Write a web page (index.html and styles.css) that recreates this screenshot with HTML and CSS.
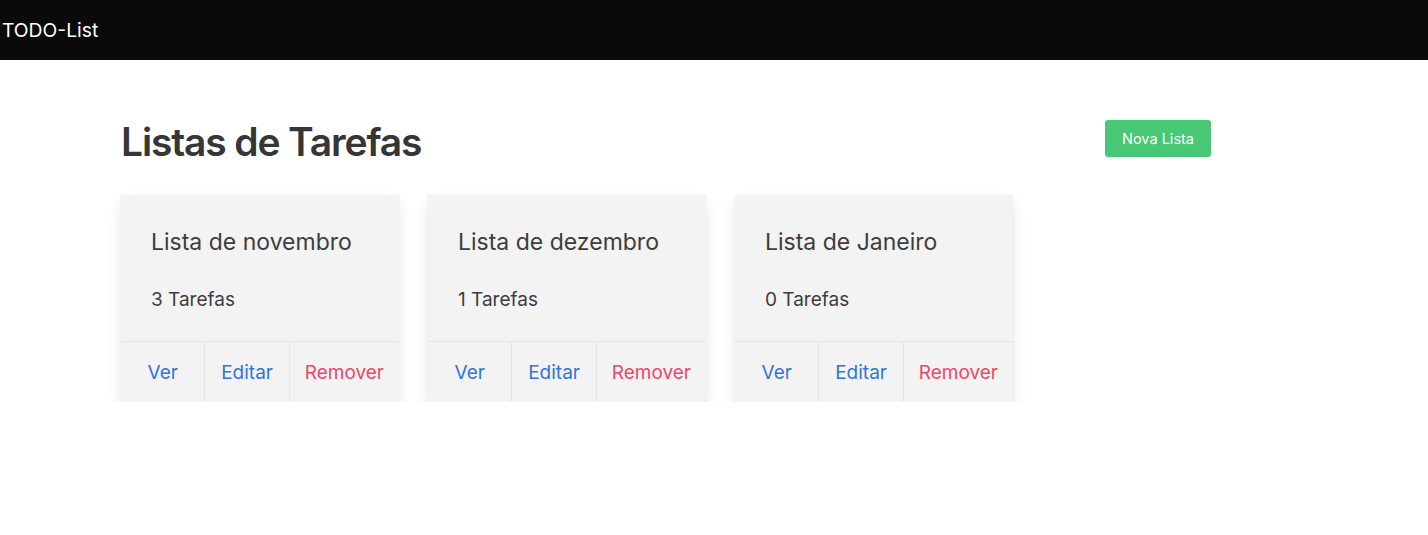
FILE: index.html
```html
<!DOCTYPE html>
<html lang="pt">
<head>
<meta charset="utf-8">
<title>TODO-List</title>
<link rel="stylesheet" href="styles.css">
</head>
<body>
<nav class="navbar">
  <span class="brand">TODO-List</span>
</nav>
<main class="container">
  <div class="page-head">
    <h1 class="title">Listas de Tarefas</h1>
    <button class="btn-success" type="button">Nova Lista</button>
  </div>
  <div class="cards">
    <div class="card">
      <div class="card-content">
        <p class="card-title">Lista de novembro</p>
        <p class="card-sub">3 Tarefas</p>
      </div>
      <footer class="card-footer">
        <a class="card-footer-item link">Ver</a>
        <a class="card-footer-item link">Editar</a>
        <a class="card-footer-item danger">Remover</a>
      </footer>
    </div>
    <div class="card">
      <div class="card-content">
        <p class="card-title">Lista de dezembro</p>
        <p class="card-sub">1 Tarefas</p>
      </div>
      <footer class="card-footer">
        <a class="card-footer-item link">Ver</a>
        <a class="card-footer-item link">Editar</a>
        <a class="card-footer-item danger">Remover</a>
      </footer>
    </div>
    <div class="card">
      <div class="card-content">
        <p class="card-title">Lista de Janeiro</p>
        <p class="card-sub">0 Tarefas</p>
      </div>
      <footer class="card-footer">
        <a class="card-footer-item link">Ver</a>
        <a class="card-footer-item link">Editar</a>
        <a class="card-footer-item danger">Remover</a>
      </footer>
    </div>
  </div>
</main>
</body>
</html>
```
FILE: styles.css
```css
* { box-sizing: border-box; }
html, body { margin: 0; padding: 0; }
body {
  font-family: Inter, "Noto Sans", "Liberation Sans", sans-serif;
  color: #4a4a4a;
  background: #fff;
}
.navbar {
  height: 60px;
  background: #0a0a0a;
  display: flex;
  align-items: center;
  padding-left: 2px;
}
.brand {
  color: #fff;
  font-size: 19.3px;
  line-height: 24px;
}
.container {
  margin-left: 121px;
  width: 1090px;
  padding-top: 58px;
}
.page-head {
  display: flex;
  justify-content: space-between;
  align-items: flex-start;
  height: 77px;
}
.title {
  margin: 0;
  font-size: 39px;
  line-height: 48px;
  font-weight: 600;
  color: #363636;
  letter-spacing: -1.15px;
}
.btn-success {
  height: 37px;
  margin-top: 2px;
  padding: 0 17px;
  border: none;
  border-radius: 3px;
  background: #48c774;
  color: #fff;
  font-family: inherit;
  font-size: 14.5px;
}
.cards {
  display: grid;
  grid-template-columns: repeat(3, 278px);
  column-gap: 29px;
}
.card {
  background: #f3f3f3;
  box-shadow: 0 8px 16px -2px rgba(10,10,10,0.12), 0 0 0 1px rgba(10,10,10,0.02);
}
.card-content {
  padding: 32px 30px 26px;
}
.card-title {
  margin: 0;
  font-size: 23px;
  line-height: 30px;
  color: #3d3d3d;
}
.card-sub {
  margin: 28px 0 0;
  font-size: 19px;
  line-height: 30px;
  color: #3d3d3d;
}
.card-footer {
  display: flex;
  border-top: 1px solid #e4e4e4;
}
.card-footer-item {
  flex: 1 0 0;
  display: flex;
  align-items: center;
  justify-content: center;
  height: 60px;
  padding: 0 15px;
  font-size: 19px;
  white-space: nowrap;
}
.card-footer-item + .card-footer-item {
  border-left: 1px solid #e4e4e4;
}
.link { color: #3273dc; }
.danger { color: #f14668; }
```
